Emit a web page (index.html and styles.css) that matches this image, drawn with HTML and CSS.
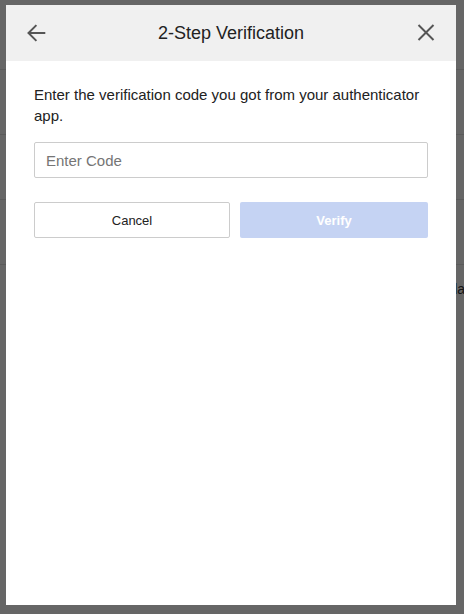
FILE: index.html
```html
<!DOCTYPE html>
<html lang="en">
<head>
<meta charset="utf-8">
<title>2-Step Verification</title>
<link rel="stylesheet" href="styles.css">
</head>
<body>
<div class="page">
  <div class="page-top"></div>
  <div class="page-row"></div>
  <div class="page-row"></div>
  <div class="page-row"></div>
  <div class="page-row page-row-text">Calendar settings</div>
</div>
<div class="overlay"></div>
<div class="modal" role="dialog" aria-labelledby="dlg-title">
  <div class="modal-header">
    <button class="icon-btn" aria-label="Back">
      <svg width="40" height="40" viewBox="0 0 40 40" fill="none" stroke="#555" stroke-width="2">
        <line x1="12.5" y1="20" x2="29.3" y2="20"/>
        <polyline points="20.4,12.1 12.5,20 20.4,27.9"/>
      </svg>
    </button>
    <h1 class="modal-title" id="dlg-title">2-Step Verification</h1>
    <button class="icon-btn" aria-label="Close">
      <svg width="40" height="40" viewBox="0 0 40 40" fill="none" stroke="#555" stroke-width="2">
        <line x1="12.5" y1="12" x2="27.5" y2="27"/>
        <line x1="27.5" y1="12" x2="12.5" y2="27"/>
      </svg>
    </button>
  </div>
  <div class="modal-body">
    <p class="intro">Enter the verification code you got from your authenticator app.</p>
    <input class="code-input" type="text" placeholder="Enter Code">
    <div class="actions">
      <button class="btn btn-cancel">Cancel</button>
      <button class="btn btn-verify" disabled>Verify</button>
    </div>
  </div>
</div>
</body>
</html>
```

FILE: styles.css
```css
html, body {
  margin: 0;
  padding: 0;
}
body {
  font-family: "Liberation Sans", Arial, sans-serif;
  background: #fff;
  width: 464px;
  height: 614px;
  overflow: hidden;
}
.page {
  background: #fff;
}
.page-top {
  height: 69px;
  border-bottom: 1px solid #e4e4e4;
}
.page-row {
  height: 64px;
  border-bottom: 1px solid #e4e4e4;
}
.page-row-text {
  border-bottom: none;
  box-sizing: border-box;
  padding-top: 16px;
  padding-left: 413px;
  font-size: 14px;
  color: #333;
  white-space: nowrap;
}
.overlay {
  position: fixed;
  inset: 0;
  background: rgba(0, 0, 0, 0.6);
}
.modal {
  position: fixed;
  left: 6px;
  top: 5px;
  width: 450px;
  height: 600px;
  background: #fff;
  display: flex;
  flex-direction: column;
}
.modal-header {
  height: 56px;
  background: #f0f0f0;
  display: flex;
  align-items: center;
  justify-content: space-between;
  padding: 0 10px;
}
.icon-btn {
  width: 40px;
  height: 40px;
  padding: 0;
  margin: 0;
  border: none;
  background: transparent;
  display: flex;
  cursor: pointer;
}
.modal-title {
  margin: 0;
  font-size: 18px;
  font-weight: normal;
  color: #222;
}
.modal-body {
  padding: 23px 28px 0;
  display: flex;
  flex-direction: column;
}
.intro {
  margin: 0;
  font-size: 15px;
  line-height: 21px;
  color: #222;
}
.code-input {
  margin-top: 16px;
  height: 36px;
  box-sizing: border-box;
  border: 1px solid #ccc;
  border-radius: 2px;
  padding: 0 11px;
  font-family: "Liberation Sans", Arial, sans-serif;
  font-size: 15px;
  color: #222;
  outline: none;
}
.code-input::placeholder {
  color: #757575;
}
.actions {
  margin-top: 24px;
  display: flex;
  gap: 10px;
}
.btn {
  height: 36px;
  box-sizing: border-box;
  border-radius: 2px;
  font-family: "Liberation Sans", Arial, sans-serif;
  font-size: 13px;
  padding: 0;
  margin: 0;
}
.btn-cancel {
  width: 196px;
  background: #fff;
  border: 1px solid #ccc;
  color: #222;
}
.btn-verify {
  flex: 1;
  background: #c5d3f3;
  border: none;
  color: #fff;
  font-weight: bold;
}
```
